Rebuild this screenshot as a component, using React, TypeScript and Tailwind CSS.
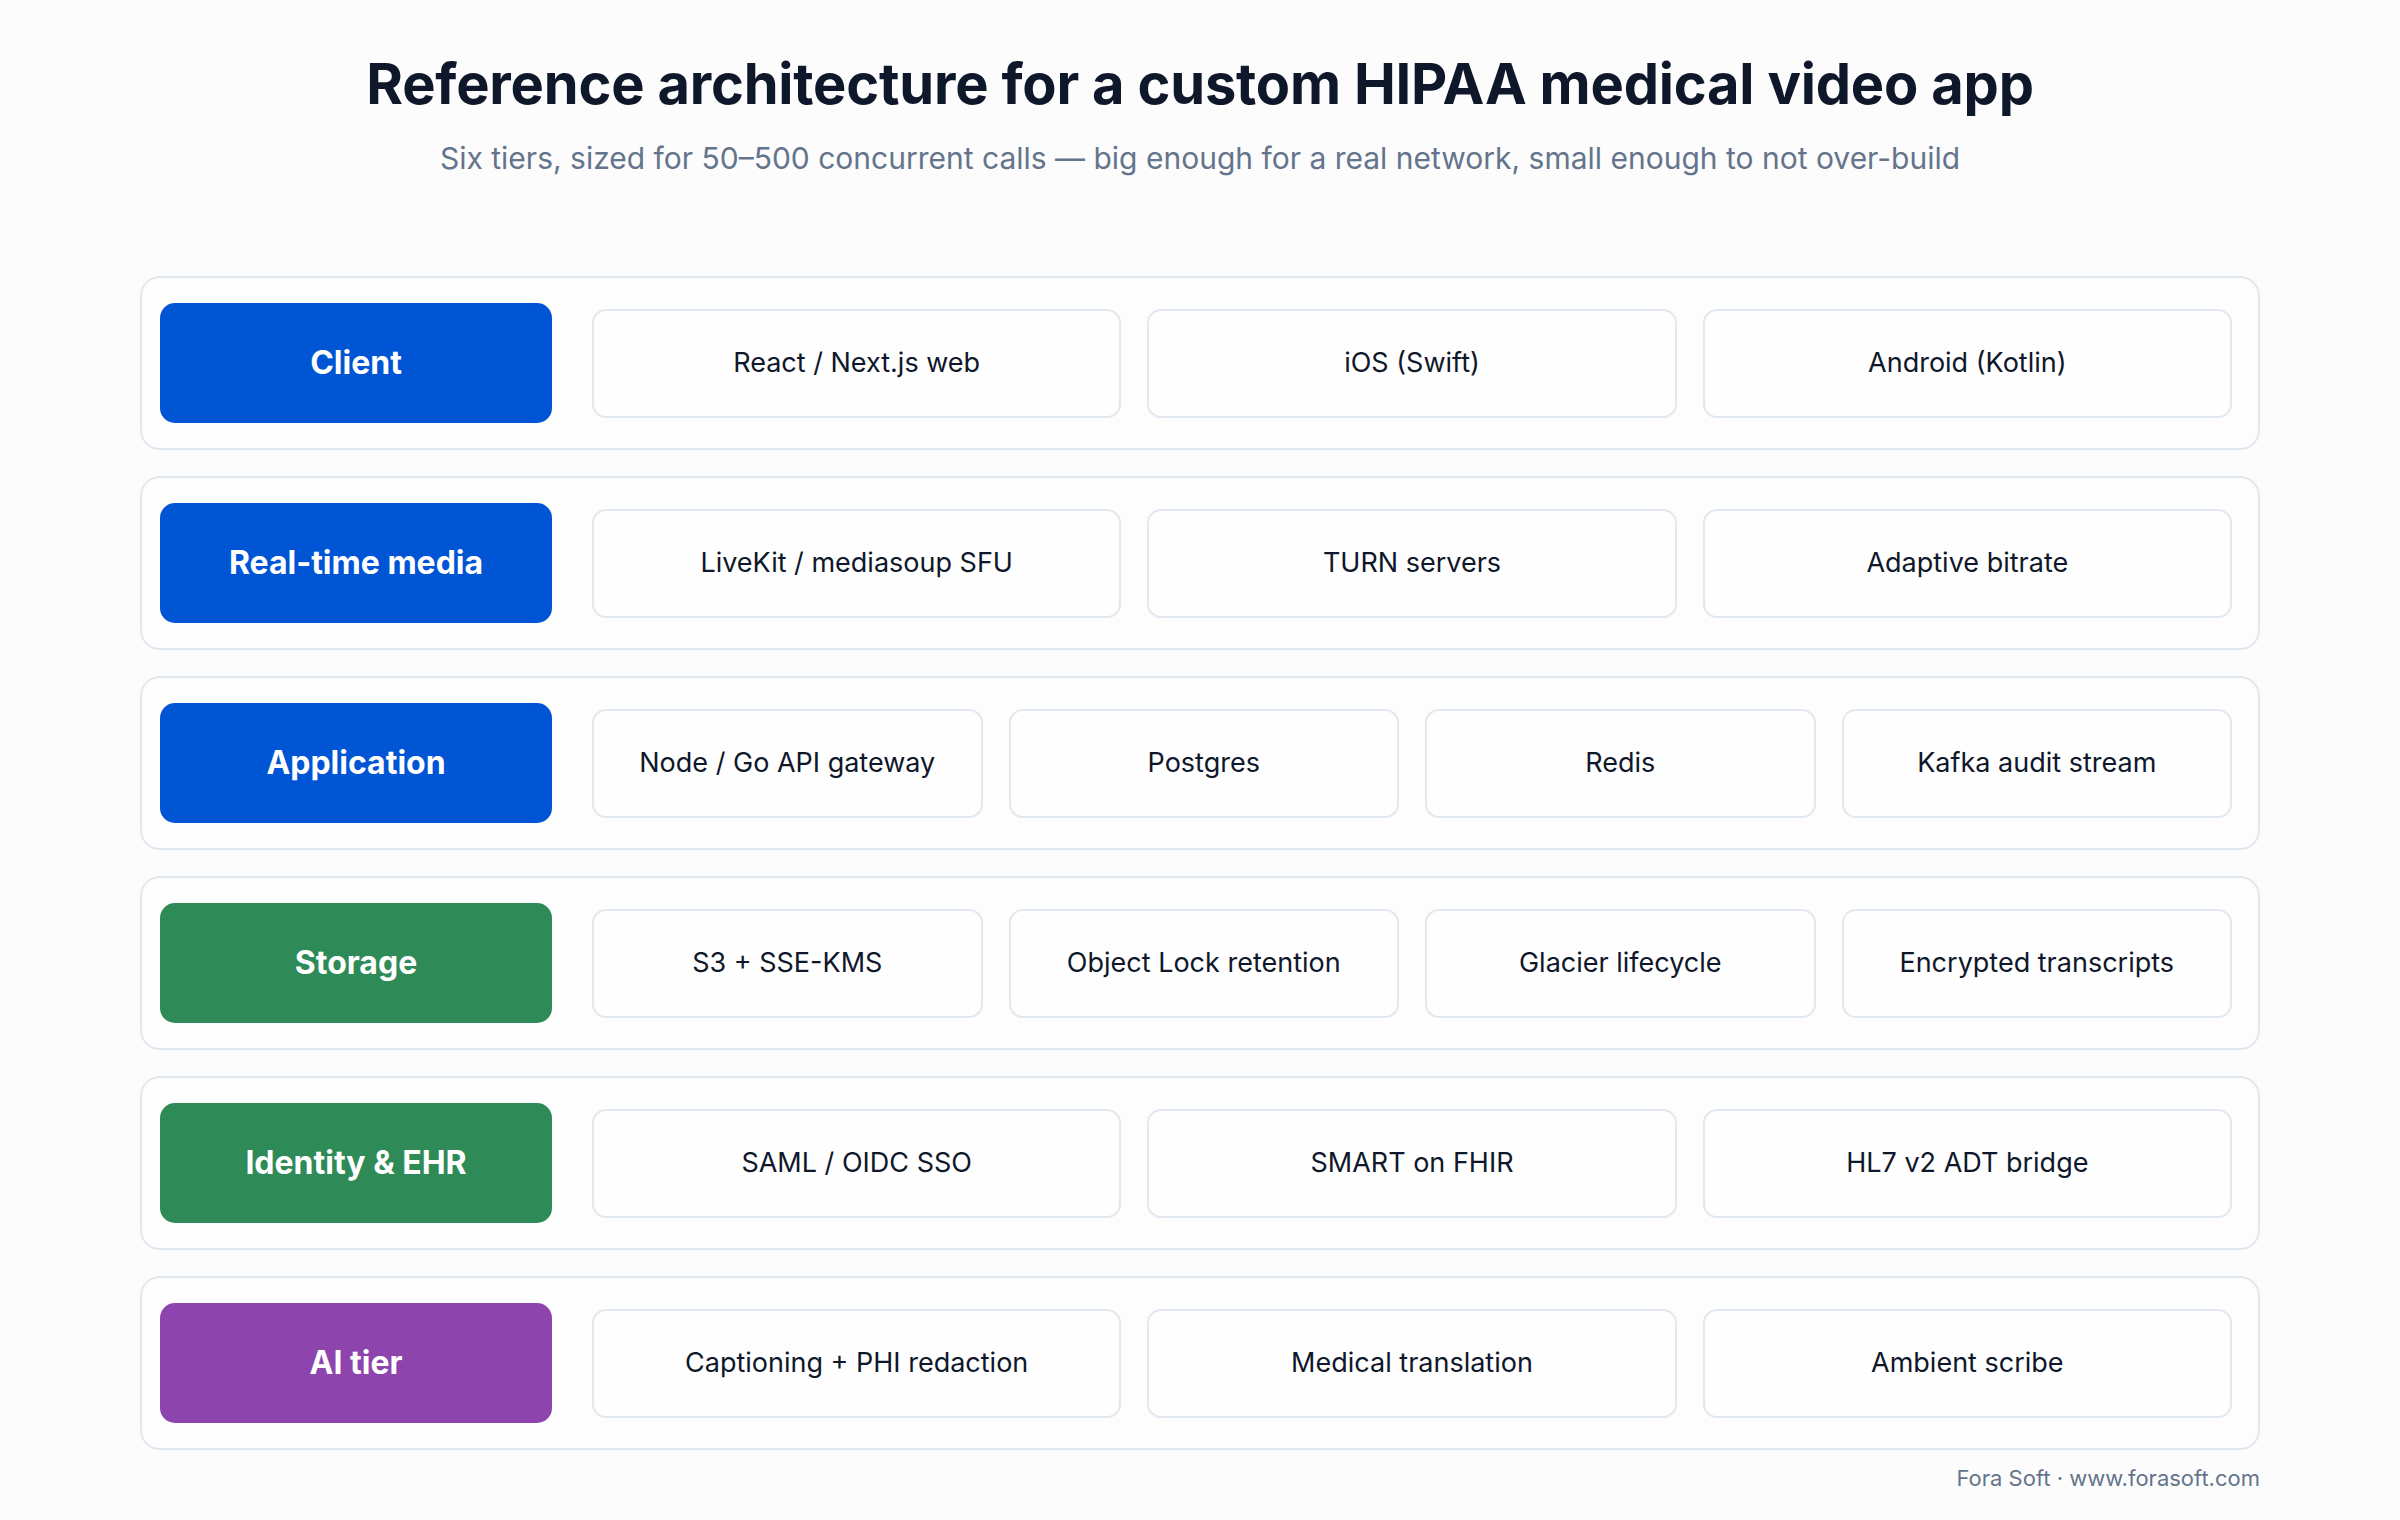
import React from "react";

type Tier = { name: string; color: string; items: string[] };

const tiers: Tier[] = [
  { name: "Client", color: "bg-[#0055d4]", items: ["React / Next.js web", "iOS (Swift)", "Android (Kotlin)"] },
  { name: "Real-time media", color: "bg-[#0055d4]", items: ["LiveKit / mediasoup SFU", "TURN servers", "Adaptive bitrate"] },
  { name: "Application", color: "bg-[#0055d4]", items: ["Node / Go API gateway", "Postgres", "Redis", "Kafka audit stream"] },
  { name: "Storage", color: "bg-[#2e8b57]", items: ["S3 + SSE-KMS", "Object Lock retention", "Glacier lifecycle", "Encrypted transcripts"] },
  { name: "Identity & EHR", color: "bg-[#2e8b57]", items: ["SAML / OIDC SSO", "SMART on FHIR", "HL7 v2 ADT bridge"] },
  { name: "AI tier", color: "bg-[#8e44ad]", items: ["Captioning + PHI redaction", "Medical translation", "Ambient scribe"] },
];

export default function App() {
  return (
    <div
      className="w-[2400px] h-[1520px] bg-[#fcfcfd] overflow-hidden"
      style={{ fontFamily: "Inter, 'Noto Sans', sans-serif" }}
    >
      <div className="pt-[56px] text-center">
        <h1 className="text-[56px] leading-[56px] font-bold text-[#0f172a] tracking-[-0.2px]">
          Reference architecture for a custom HIPAA medical video app
        </h1>
        <p className="mt-[31px] text-[30px] leading-[30px] text-[#64748b]">
          Six tiers, sized for 50–500 concurrent calls — big enough for a real network, small enough to not over-build
        </p>
      </div>
      <div className="mx-auto w-[2120px] mt-[103px] flex flex-col gap-[26px]">
        {tiers.map((t) => (
          <div
            key={t.name}
            className="h-[174px] flex items-center gap-[40px] rounded-[20px] border-2 border-[#e2e8f0] bg-[#fdfdfe] pl-[18px] pr-[26px]"
          >
            <div
              className={`${t.color} w-[392px] h-[120px] shrink-0 rounded-[15px] flex items-center justify-center text-white text-[32px] font-bold`}
            >
              {t.name}
            </div>
            <div
              className={`flex-1 grid gap-[26px] ${t.items.length === 4 ? "grid-cols-4" : "grid-cols-3"}`}
            >
              {t.items.map((it) => (
                <div
                  key={it}
                  className="h-[109px] rounded-[14px] border-2 border-[#e2e8f0] bg-[#fefefe] flex items-center justify-center text-[27px] text-[#0f172a]"
                >
                  {it}
                </div>
              ))}
            </div>
          </div>
        ))}
        <div className="-mt-[9px] text-right text-[22px] leading-[22px] text-[#64748b]">
          Fora Soft · www.forasoft.com
        </div>
      </div>
    </div>
  );
}
